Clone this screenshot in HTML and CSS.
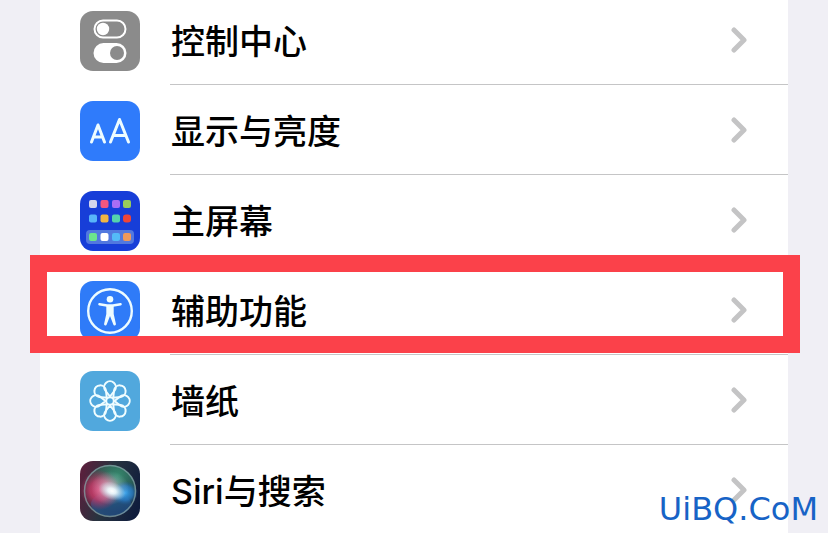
FILE: index.html
```
<!DOCTYPE html>
<html lang="zh-CN">
<head>
    <meta charset="UTF-8">
    <meta name="viewport" content="width=device-width, initial-scale=1.0">
    <title>设置</title>
    <link rel="stylesheet" href="styles.css">
</head>
<body>
    <!-- Shared shapes -->
    <svg class="defs" width="0" height="0">
        <symbol id="chevron" viewBox="0 0 16 26">
            <path d="M3 3 L13 13 L3 23" fill="none" stroke="#c4c4c5" stroke-width="5" stroke-linecap="round" stroke-linejoin="round"/>
        </symbol>
    </svg>

    <nav class="settings">
        <a class="row" href="#">
            <svg class="icon" viewBox="0 0 60 60">
                <rect width="60" height="60" fill="#8b8b8b"/>
                <rect x="14.500" y="9.500" width="31" height="17" rx="8.500" fill="none" stroke="#fff" stroke-width="2"/>
                <circle cx="23" cy="18" r="6.200" fill="#fff"/>
                <rect x="13.500" y="32" width="33" height="20" rx="10" fill="#fff"/>
                <circle cx="37" cy="42" r="7" fill="#8b8b8b"/>
            </svg>
            <span class="label">控制中心</span>
            <svg class="chevron"><use href="#chevron"/></svg>
        </a>

        <a class="row" href="#">
            <svg class="icon" viewBox="0 0 60 60">
                <rect width="60" height="60" fill="#2f7bfb"/>
                <g fill="none" stroke="#edfcff" stroke-width="3" stroke-linecap="round" stroke-linejoin="round">
                    <path d="M11.500 41 L18 24 L24.500 41 M13.800 36 H22.200"/>
                    <path d="M30.500 41 L39.500 18.500 L48.500 41 M33.500 34.500 H45.500"/>
                </g>
            </svg>
            <span class="label">显示与亮度</span>
            <svg class="chevron"><use href="#chevron"/></svg>
        </a>

        <a class="row" href="#">
            <svg class="icon" viewBox="0 0 60 60">
                <rect width="60" height="60" fill="#173ed8"/>
                <rect x="6" y="39" width="48" height="14" rx="4" fill="#5278df"/>
                <rect x="9" y="9" width="8" height="8" rx="2" fill="#d3d5ec"/>
                <rect x="20.500" y="9" width="8" height="8" rx="2" fill="#f2577f"/>
                <rect x="32" y="9" width="8" height="8" rx="2" fill="#aa6df5"/>
                <rect x="43" y="9" width="8" height="8" rx="2" fill="#98cc5b"/>
                <rect x="9" y="23.500" width="8" height="8" rx="2" fill="#58b5fa"/>
                <rect x="20.500" y="23.500" width="8" height="8" rx="2" fill="#f0b643"/>
                <rect x="32" y="23.500" width="8" height="8" rx="2" fill="#55d3ad"/>
                <rect x="43" y="23.500" width="8" height="8" rx="3" fill="#ef4537"/>
                <rect x="9" y="42" width="8" height="8" rx="2" fill="#6ce58d"/>
                <rect x="20.500" y="42" width="8" height="8" rx="2" fill="#fff"/>
                <rect x="32" y="42" width="8" height="8" rx="2" fill="#54baf8"/>
                <rect x="43" y="42" width="8" height="8" rx="2" fill="#ef995c"/>
            </svg>
            <span class="label">主屏幕</span>
            <svg class="chevron"><use href="#chevron"/></svg>
        </a>

        <a class="row marked" href="#">
            <svg class="icon" viewBox="0 0 60 60">
                <rect width="60" height="60" fill="#2f7bf8"/>
                <circle cx="30" cy="30" r="21.800" fill="none" stroke="#edfcff" stroke-width="2.400"/>
                <circle cx="30" cy="18.300" r="3.300" fill="#edfcff"/>
                <path d="M19.500 23.300 L27 24.500 H33 L40.500 23.300" fill="none" stroke="#edfcff" stroke-width="2.600" stroke-linecap="round" stroke-linejoin="round"/>
                <path d="M26.300 24 H33.700 V33 L35.900 42.800 A1.300 1.300 0 0 1 33.300 43.500 L30 35 L26.700 43.500 A1.300 1.300 0 0 1 24.100 42.800 L26.300 33 Z" fill="#edfcff"/>
            </svg>
            <span class="label">辅助功能</span>
            <svg class="chevron"><use href="#chevron"/></svg>
        </a>

        <a class="row" href="#">
            <svg class="icon" viewBox="0 0 60 60">
                <defs>
                    <path id="petal" d="M30 25.500 L25.300 19.500 A5.800 5.800 0 1 1 34.700 19.500 Z"/>
                </defs>
                <rect width="60" height="60" fill="#51a8dd"/>
                <g fill="none" stroke="#f0fdff" stroke-width="2" stroke-linejoin="round">
                    <use href="#petal"/>
                    <use href="#petal" transform="rotate(45 30 30)"/>
                    <use href="#petal" transform="rotate(90 30 30)"/>
                    <use href="#petal" transform="rotate(135 30 30)"/>
                    <use href="#petal" transform="rotate(180 30 30)"/>
                    <use href="#petal" transform="rotate(225 30 30)"/>
                    <use href="#petal" transform="rotate(270 30 30)"/>
                    <use href="#petal" transform="rotate(315 30 30)"/>
                    <circle cx="30" cy="30" r="3.800"/>
                </g>
            </svg>
            <span class="label">墙纸</span>
            <svg class="chevron"><use href="#chevron"/></svg>
        </a>

        <a class="row" href="#">
            <svg class="icon" viewBox="0 0 60 60">
                <defs>
                    <linearGradient id="siriBack" x1="0" y1="0.300" x2="1" y2="0.600">
                        <stop offset="0" stop-color="#58203c"/>
                        <stop offset="0.450" stop-color="#28333f"/>
                        <stop offset="1" stop-color="#101d3d"/>
                    </linearGradient>
                    <radialGradient id="siriGreen" cx="0.650" cy="0.200" r="0.700">
                        <stop offset="0" stop-color="#36886c"/>
                        <stop offset="1" stop-color="#36886c" stop-opacity="0"/>
                    </radialGradient>
                    <radialGradient id="siriPink">
                        <stop offset="0" stop-color="#e0396f"/>
                        <stop offset="0.500" stop-color="#c93967" stop-opacity="0.800"/>
                        <stop offset="1" stop-color="#b53260" stop-opacity="0"/>
                    </radialGradient>
                    <radialGradient id="siriBlue">
                        <stop offset="0" stop-color="#37a2ed"/>
                        <stop offset="0.600" stop-color="#2979c1" stop-opacity="0.800"/>
                        <stop offset="1" stop-color="#205c9c" stop-opacity="0"/>
                    </radialGradient>
                    <radialGradient id="siriGlow">
                        <stop offset="0" stop-color="#fff"/>
                        <stop offset="0.300" stop-color="#eefcff" stop-opacity="0.900"/>
                        <stop offset="1" stop-color="#b9dce9" stop-opacity="0"/>
                    </radialGradient>
                </defs>
                <rect width="60" height="60" fill="url(#siriBack)"/>
                <circle cx="30" cy="30" r="26" fill="url(#siriGreen)"/>
                <ellipse cx="31" cy="43" rx="20" ry="12" fill="#255c9b" opacity="0.600"/>
                <circle cx="20" cy="29" r="20" fill="url(#siriPink)"/>
                <ellipse cx="45" cy="32" rx="13" ry="12" fill="url(#siriBlue)"/>
                <ellipse cx="30" cy="27" rx="19" ry="17" fill="url(#siriGlow)" opacity="0.500"/>
                <ellipse cx="32" cy="30" rx="14" ry="9" fill="url(#siriGlow)" transform="rotate(18 32 30)"/>
                <circle cx="30" cy="30" r="25.500" fill="none" stroke="#86a3a7" stroke-width="1.500" opacity="0.750"/>
            </svg>
            <span class="label">Siri与搜索</span>
            <svg class="chevron"><use href="#chevron"/></svg>
        </a>
    </nav>

    <div class="watermark">UiBQ.CoM</div>
</body>
</html>
```
FILE: styles.css
```
* {
    box-sizing: border-box;
}

body {
    margin: 0;
    min-height: 100vh;
    position: relative;
    overflow: hidden;
    background-color: #f0eff5;
    font-family: Inter, "Noto Sans CJK SC", sans-serif;
}

.defs {
    position: absolute;
}

/* List is scrolled a little past the top edge */
.settings {
    margin: -5px 40px 0;
    background-color: #fff;
}

.row {
    position: relative;
    display: flex;
    align-items: center;
    height: 90px;
    padding: 2px 41px 0 40px;
    color: #000;
    text-decoration: none;
}

/* Divider starts under the label */
.row::before {
    content: "";
    position: absolute;
    left: 130px;
    right: 0;
    bottom: 0;
    height: 1px;
    background-color: #c5c5c6;
}

.icon {
    width: 60px;
    height: 60px;
    border-radius: 13px;
    flex: none;
}

.label {
    flex: 1;
    margin-left: 31px;
    padding-top: 2px;
    font-size: 34px;
    line-height: 48px;
    font-weight: 500;
}

.chevron {
    width: 16px;
    height: 26px;
    margin-bottom: 2px;
    flex: none;
}

/* Red highlight box */
.marked::after {
    content: "";
    position: absolute;
    top: -10px;
    right: -12px;
    bottom: 2px;
    left: -10px;
    border: 17px solid #fb414a;
    z-index: 1;
}

.watermark {
    position: absolute;
    right: 10px;
    bottom: 6px;
    font-family: "DejaVu Sans", sans-serif;
    font-size: 32px;
    line-height: 40px;
    color: #1763c6;
}
```
